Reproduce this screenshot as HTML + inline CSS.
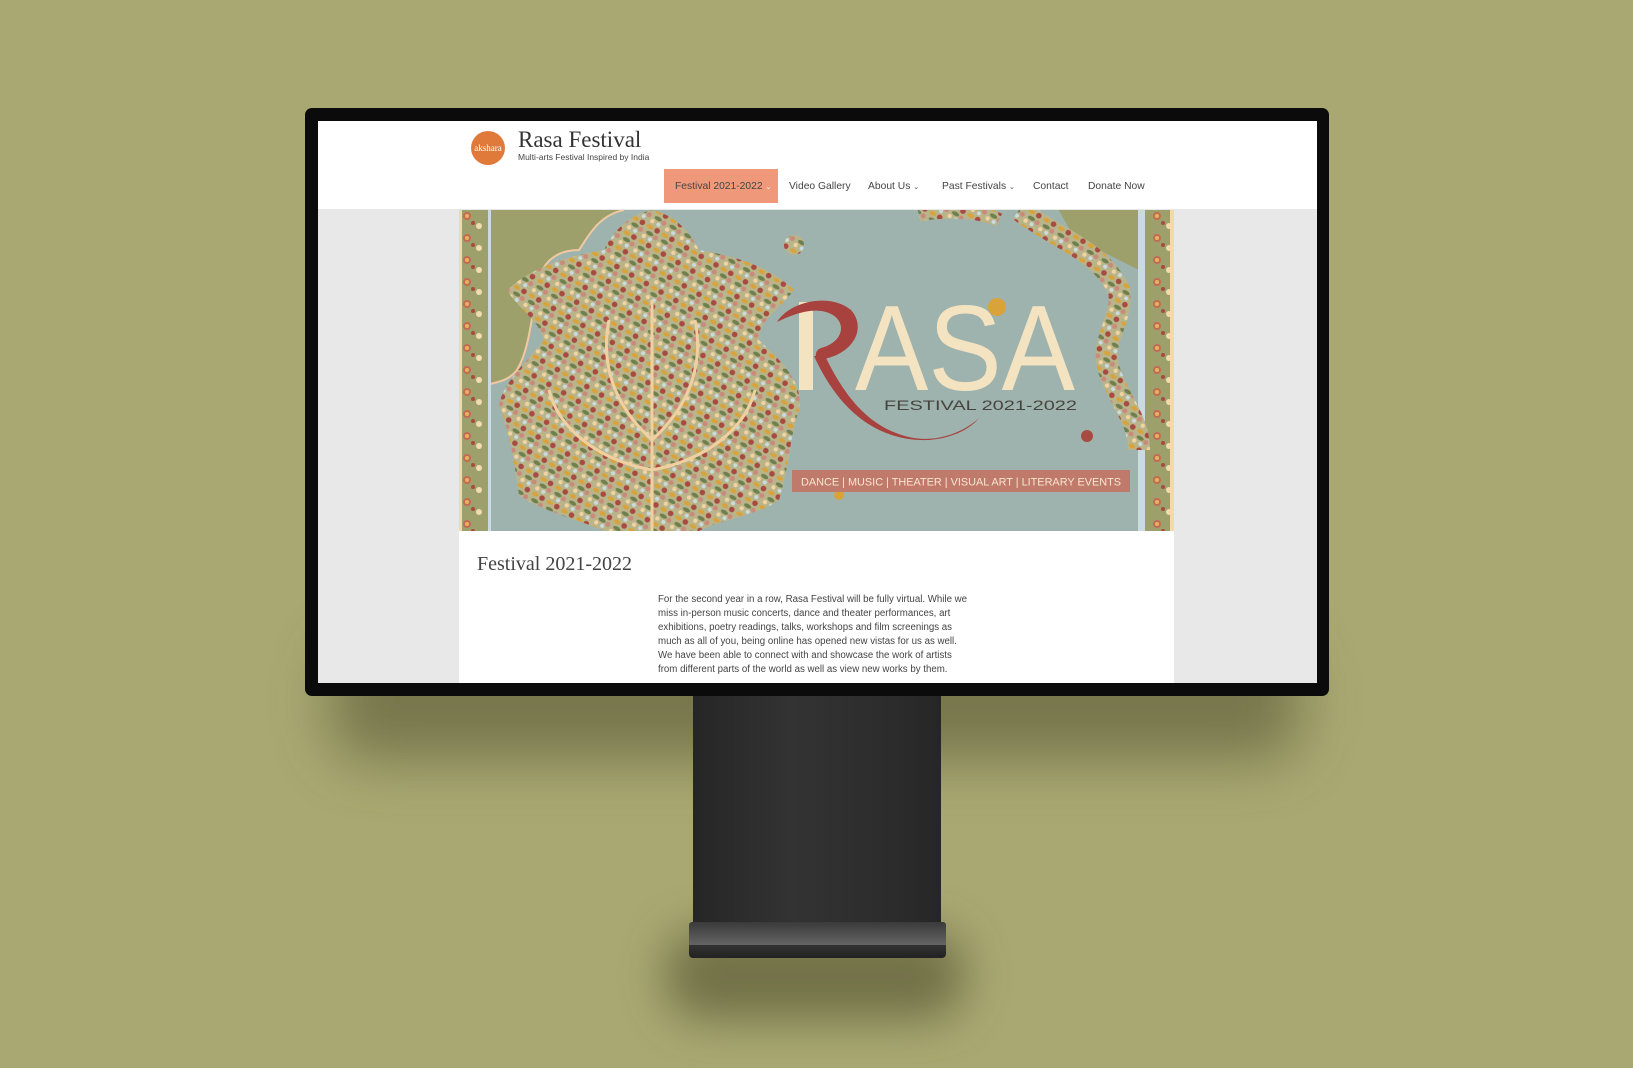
<!DOCTYPE html>
<html><head><meta charset="utf-8"><style>
*{margin:0;padding:0;box-sizing:border-box}
body{width:1633px;height:1068px;background:#a9a872;position:relative;overflow:hidden;font-family:"Liberation Sans",sans-serif}
.abs{position:absolute}
.shadow{left:330px;top:640px;width:970px;height:120px;background:rgba(60,60,30,.45);filter:blur(28px);border-radius:40px}
.shadow2{left:665px;top:930px;width:300px;height:90px;background:rgba(60,60,30,.5);filter:blur(22px);border-radius:40px}
.bezel{left:305px;top:108px;width:1024px;height:588px;background:#0b0b0b;border-radius:7px}
.screen{left:318px;top:121px;width:999px;height:562px;background:#e8e8e8;overflow:hidden}
.stand{left:693px;top:696px;width:248px;height:232px;background:linear-gradient(90deg,#262626,#333 40%,#2c2c2c 80%,#262626)}
.base1{left:689px;top:922px;width:257px;height:24px;background:linear-gradient(#3a3a3a,#666);border-radius:3px 3px 0 0}
.base2{left:689px;top:945px;width:257px;height:13px;background:linear-gradient(#333,#222);border-radius:0 0 4px 4px}
.header{left:0;top:0;width:999px;height:88px;background:#fff}
.nav{font-size:10.3px;color:#444;top:60px}
.content{left:141px;top:89px;width:715px;height:480px;background:#fff}
</style></head><body>
<div class="abs shadow"></div>
<div class="abs shadow2"></div>
<div class="abs stand"></div>
<div class="abs base1"></div>
<div class="abs base2"></div>
<div class="abs bezel"></div>
<div class="abs screen">
  <div class="abs header">
    <div class="abs" style="left:153px;top:10px;width:34px;height:34px;border-radius:50%;background:#e07a3a;color:#fff;font-family:'Liberation Serif',serif;font-size:9px;line-height:34px;text-align:center;overflow:hidden">akshara</div>
    <div class="abs" style="left:200px;top:6px;font-family:'Liberation Serif',serif;font-size:23px;color:#333">Rasa Festival</div>
    <div class="abs" style="left:200px;top:31px;font-size:8.5px;color:#444">Multi-arts Festival Inspired by India</div>
    <div class="abs" style="left:346px;top:48px;width:114px;height:34px;background:#f0997a"></div>
    <div class="abs nav" style="left:357px">Festival 2021-2022 <span style="font-size:7px;color:#fff">&#8964;</span></div>
    <div class="abs nav" style="left:471px">Video Gallery</div>
    <div class="abs nav" style="left:550px">About Us <span style="font-size:7px">&#8964;</span></div>
    <div class="abs nav" style="left:624px">Past Festivals <span style="font-size:7px">&#8964;</span></div>
    <div class="abs nav" style="left:715px">Contact</div>
    <div class="abs nav" style="left:770px">Donate Now</div>
  </div>
  <div class="abs content">
    <svg class="abs" style="left:0;top:0" width="715" height="321" viewBox="0 0 715 321">
      <defs>
        <pattern id="flo" width="17" height="17" patternUnits="userSpaceOnUse" patternTransform="rotate(30)">
          <rect width="17" height="17" fill="#b9b48a"/>
          <ellipse cx="4" cy="4" rx="3.5" ry="2" fill="#d9a33a"/>
          <circle cx="12" cy="4" r="2.8" fill="#a84a40"/>
          <ellipse cx="7" cy="10" rx="4" ry="2" fill="#6f7f4e"/>
          <circle cx="14" cy="11" r="2.5" fill="#c98a7c"/>
          <circle cx="3" cy="15" r="2.2" fill="#f0d3a0"/>
          <circle cx="10" cy="15" r="2" fill="#c9dbe0"/>
        </pattern>
        <pattern id="brd" width="30" height="22" patternUnits="userSpaceOnUse">
          <rect width="30" height="22" fill="#9da06a"/>
          <circle cx="8" cy="6" r="4" fill="#c46a55"/>
          <circle cx="8" cy="6" r="2" fill="#e3b45a"/>
          <circle cx="20" cy="16" r="3" fill="#f0dcb0"/>
          <circle cx="14" cy="13" r="2" fill="#a84a40"/>
        </pattern>
      </defs>
      <rect width="715" height="321" fill="#9fb3ae"/>
      <path d="M0,0 H165 C140,5 130,25 120,40 C95,40 80,55 78,80 C72,110 70,140 58,160 C50,170 40,172 31,174 V0Z" fill="#9da06a"/>
      <path d="M165,0 C140,5 130,25 120,40 C95,40 80,55 78,80 C72,110 70,140 58,160 C50,170 40,172 31,174" fill="none" stroke="#f0c9a0" stroke-width="2"/>
      <rect x="0" y="0" width="3" height="321" fill="#f2d9a8"/>
      <rect x="3" y="0" width="26" height="321" fill="url(#brd)"/>
      <rect x="29" y="0" width="3" height="321" fill="#c9dbe0"/>
      <path d="M600,0 H680 V60 C660,50 640,40 620,30 C610,20 605,10 600,0Z" fill="#9da06a"/>
      <rect x="679" y="0" width="7" height="321" fill="#c9dbe0"/>
      <rect x="686" y="0" width="25" height="321" fill="url(#brd)"/>
      <rect x="711" y="0" width="4" height="321" fill="#f2d9a8"/>
      <path d="M560,0 C600,30 640,40 660,80 C665,110 640,130 650,160 C660,190 680,210 680,240" fill="none" stroke="url(#flo)" stroke-width="22"/>
      <path d="M460,5 C480,0 520,0 540,10" fill="none" stroke="url(#flo)" stroke-width="14"/>
      <circle cx="335" cy="35" r="10" fill="url(#flo)"/>
      <circle cx="538" cy="97" r="9" fill="#d9a33a"/>
      <circle cx="628" cy="226" r="6" fill="#a84a40"/>
      <circle cx="380" cy="285" r="5" fill="#d9a33a"/>
      <path d="M193,0 C215,5 230,20 240,40 C270,45 310,55 335,80 C320,100 300,110 300,130 C320,150 345,170 340,200 C330,230 330,260 320,290 C300,305 260,310 240,321 H146 C120,310 80,300 60,285 C55,250 50,220 40,195 C45,170 70,150 85,130 C80,110 60,100 48,80 C75,55 115,45 145,40 C155,20 170,5 193,0Z" fill="url(#flo)"/>
      <path d="M193,90 V321 M193,230 C160,200 140,160 150,110 M193,230 C226,200 246,160 236,110 M193,260 C140,250 100,220 90,180 M193,260 C246,250 286,220 296,180" fill="none" stroke="#f0cfa0" stroke-width="3"/>
      <rect x="340" y="92" width="14" height="88" fill="#f4e3c0"/>
      <path d="M318,112 C330,92 370,82 392,100 C408,118 395,145 360,150 C355,148 356,140 362,138 C385,132 388,112 372,104 C355,96 335,104 318,112Z" fill="#a8423f"/>
      <path d="M355,146 C375,190 410,232 470,230 C495,228 512,218 520,208 C505,222 480,232 455,228 C410,220 385,185 366,146Z" fill="#a8423f"/>
      <text x="396" y="180" font-family="Liberation Sans,sans-serif" font-size="122" fill="#f4e3c0" textLength="220" lengthAdjust="spacingAndGlyphs">ASA</text>
      <text x="425" y="200" font-family="Liberation Sans,sans-serif" font-size="14" fill="#47443f" textLength="193" lengthAdjust="spacingAndGlyphs">FESTIVAL 2021-2022</text>
      <rect x="333" y="260" width="338" height="22" fill="#c07a6c"/>
      <text x="342" y="275.5" font-family="Liberation Sans,sans-serif" font-size="11" fill="#f7e6cf" textLength="320" lengthAdjust="spacingAndGlyphs">DANCE | MUSIC | THEATER | VISUAL ART | LITERARY EVENTS</text>
    </svg>
    <div class="abs" style="left:18px;top:343px;font-family:'Liberation Serif',serif;font-size:20px;color:#444">Festival 2021-2022</div>
    <div class="abs" style="left:199px;top:383px;font-size:9.7px;line-height:14px;color:#444;white-space:nowrap">For the second year in a row, Rasa Festival will be fully virtual. While we<br>miss in-person music concerts, dance and theater performances, art<br>exhibitions, poetry readings, talks, workshops and film screenings as<br>much as all of you, being online has opened new vistas for us as well.<br>We have been able to connect with and showcase the work of artists<br>from different parts of the world as well as view new works by them.</div>
  </div>
</div>
</body></html>
